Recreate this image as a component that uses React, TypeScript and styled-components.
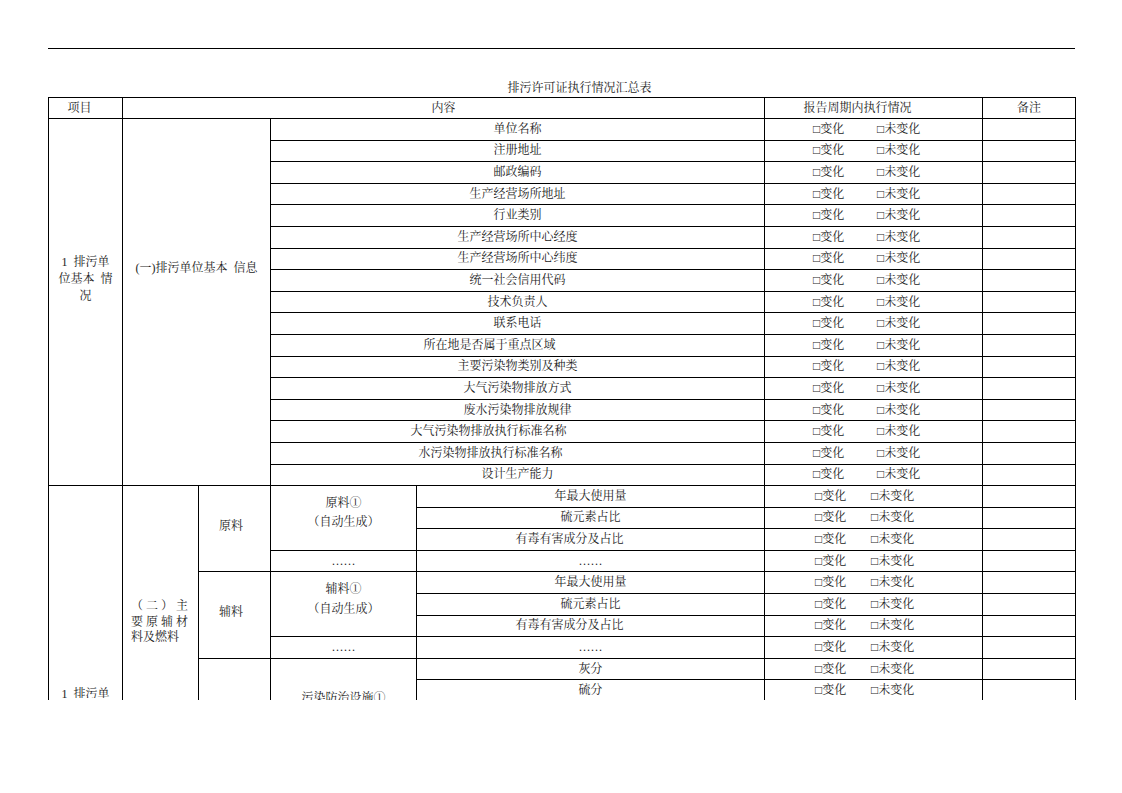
import React from "react";
import styled, { createGlobalStyle } from "styled-components";

const GlobalStyle = createGlobalStyle`
  html, body { margin: 0; padding: 0; background: #fff; }
  body {
    font-family: "Liberation Serif", "Noto Serif CJK SC", "Noto Sans CJK SC", serif;
    color: #1c1c1c;
  }
`;

const Page = styled.div`
  width: 1122px;
  height: 700px;
  overflow: hidden;
  box-sizing: border-box;
  padding: 0 47px 0 48px;
`;

const TopRule = styled.div`
  margin-top: 48px;
  height: 0;
  border-top: 1px solid #000;
`;

const Title = styled.div`
  margin-top: 31px;
  height: 17px;
  line-height: 17px;
  font-size: 12px;
  text-align: center;
  padding-left: 36px;
`;

const Sheet = styled.table`
  width: 1027px;
  border-collapse: collapse;
  table-layout: fixed;
  font-size: 12px;
`;

const Col = styled.col<{ $w: number }>`
  width: ${(p) => p.$w}px;
`;

const Row = styled.tr<{ $h?: number }>`
  height: ${(p) => p.$h ?? 21.6}px;
`;

const HeadCell = styled.th<{ $offset?: number }>`
  border: 1px solid #000;
  font-weight: normal;
  padding: 0 ${(p) => 4 + (p.$offset ?? 0)}px 0 4px;
  text-align: center;
  vertical-align: middle;
  line-height: 17px;
  white-space: nowrap;
`;

const ItemCell = styled.td<{ $offset?: number }>`
  border: 1px solid #000;
  padding: 0 ${(p) => 4 + (p.$offset ?? 0)}px 0 4px;
  text-align: center;
  vertical-align: middle;
  line-height: 17px;
  white-space: nowrap;
  overflow: hidden;
`;

const GroupCell = styled.td<{ $top: number; $lh?: number; $open?: boolean }>`
  border: 1px solid #000;
  border-bottom: ${(p) => (p.$open ? "none" : "1px solid #000")};
  padding: ${(p) => p.$top}px 4px 0 4px;
  text-align: center;
  vertical-align: top;
  line-height: ${(p) => p.$lh ?? 17}px;
  white-space: nowrap;
`;

const CutText = styled.div<{ $h: number }>`
  height: ${(p) => p.$h}px;
  overflow: hidden;
`;

const SubGroupCell = styled.td<{ $lh?: number; $lift?: number; $offset?: number; $open?: boolean }>`
  border: 1px solid #000;
  border-bottom: ${(p) => (p.$open ? "none" : "1px solid #000")};
  padding: 0 ${(p) => 4 + (p.$offset ?? 0)}px ${(p) => p.$lift ?? 0}px 4px;
  text-align: center;
  vertical-align: middle;
  line-height: ${(p) => p.$lh ?? 17}px;
  white-space: nowrap;
`;

const JustifyCell = styled.td<{ $top: number; $open?: boolean }>`
  border: 1px solid #000;
  border-bottom: ${(p) => (p.$open ? "none" : "1px solid #000")};
  padding: ${(p) => p.$top}px 10px 0 8px;
  vertical-align: top;
  line-height: 15.5px;
`;

const JustLine = styled.div<{ $spread?: boolean }>`
  display: flex;
  justify-content: ${(p) => (p.$spread ? "space-between" : "flex-start")};
`;

const CheckCell = styled.td<{ $pl: number }>`
  border: 1px solid #000;
  padding: 0 0 0 ${(p) => p.$pl}px;
  text-align: left;
  vertical-align: middle;
  line-height: 17px;
  white-space: nowrap;
`;

const Option = styled.span<{ $w?: number }>`
  display: inline-block;
  width: ${(p) => (p.$w ? `${p.$w}px` : "auto")};
`;

const NoteCell = styled.td`
  border: 1px solid #000;
  padding: 0;
`;

type Variant = { pl: number; w: number };
const SEC1: Variant = { pl: 48, w: 64 };
const SEC2: Variant = { pl: 50, w: 56 };

function Status({ v }: { v: Variant }) {
  return (
    <>
      <CheckCell $pl={v.pl}>
        <Option $w={v.w}>□变化</Option>
        <Option>□未变化</Option>
      </CheckCell>
      <NoteCell />
    </>
  );
}

const basicItems: { label: string; offset?: number }[] = [
  { label: "单位名称" },
  { label: "注册地址" },
  { label: "邮政编码" },
  { label: "生产经营场所地址" },
  { label: "行业类别" },
  { label: "生产经营场所中心经度" },
  { label: "生产经营场所中心纬度" },
  { label: "统一社会信用代码" },
  { label: "技术负责人" },
  { label: "联系电话" },
  { label: "所在地是否属于重点区域", offset: 56 },
  { label: "主要污染物类别及种类" },
  { label: "大气污染物排放方式" },
  { label: "废水污染物排放规律" },
  { label: "大气污染物排放执行标准名称", offset: 58 },
  { label: "水污染物排放执行标准名称", offset: 54 },
  { label: "设计生产能力" },
];

const materialItems: { label: string; offset?: number }[] = [
  { label: "年最大使用量" },
  { label: "硫元素占比" },
  { label: "有毒有害成分及占比", offset: 42 },
];

const fuelItems = ["灰分", "硫分"];

function JustifiedText({ lines }: { lines: string[] }) {
  return (
    <>
      {lines.map((line, i) => (
        <JustLine key={i} $spread={i < lines.length - 1}>
          {Array.from(line).map((ch, j) => (
            <span key={j}>{ch}</span>
          ))}
        </JustLine>
      ))}
    </>
  );
}

function MaterialRows({ kind }: { kind: string }) {
  return (
    <>
      {materialItems.slice(1).map((it) => (
        <Row key={kind + it.label}>
          <ItemCell $offset={it.offset}>{it.label}</ItemCell>
          <Status v={SEC2} />
        </Row>
      ))}
      <Row>
        <ItemCell>……</ItemCell>
        <ItemCell>……</ItemCell>
        <Status v={SEC2} />
      </Row>
    </>
  );
}

function MaterialHead({ kind }: { kind: string }) {
  return (
    <>
      <SubGroupCell rowSpan={4} $lift={5} $offset={7}>
        {kind}
      </SubGroupCell>
      <SubGroupCell rowSpan={3} $lh={19.4} $lift={9}>
        {kind}①
        <br />
        （自动生成）
      </SubGroupCell>
      <ItemCell>{materialItems[0].label}</ItemCell>
      <Status v={SEC2} />
    </>
  );
}

export default function App() {
  const sec2Rows = 4 + 4 + fuelItems.length;
  return (
    <>
      <GlobalStyle />
      <Page>
        <TopRule />
        <Title>排污许可证执行情况汇总表</Title>
        <Sheet>
          <colgroup>
            <Col $w={74} />
            <Col $w={76} />
            <Col $w={72} />
            <Col $w={146} />
            <Col $w={348} />
            <Col $w={218} />
            <Col $w={93} />
          </colgroup>
          <thead>
            <Row $h={21}>
              <HeadCell $offset={12}>项目</HeadCell>
              <HeadCell colSpan={4}>内容</HeadCell>
              <HeadCell $offset={32}>报告周期内执行情况</HeadCell>
              <HeadCell>备注</HeadCell>
            </Row>
          </thead>
          <tbody>
            {basicItems.map((it, i) => (
              <Row key={it.label}>
                {i === 0 && (
                  <>
                    <GroupCell rowSpan={basicItems.length} $top={135}>
                      1{"\u00a0\u00a0"}排污单
                      <br />
                      位基本{"\u00a0\u00a0"}情
                      <br />况
                    </GroupCell>
                    <GroupCell rowSpan={basicItems.length} colSpan={2} $top={141}>
                      (一)排污单位基本{"\u00a0\u00a0"}信息
                    </GroupCell>
                  </>
                )}
                <ItemCell colSpan={2} $offset={it.offset}>
                  {it.label}
                </ItemCell>
                <Status v={SEC1} />
              </Row>
            ))}

            <Row>
              <GroupCell rowSpan={sec2Rows} $top={200} $open>
                <CutText $h={12}>1{"\u00a0\u00a0"}排污单</CutText>
              </GroupCell>
              <JustifyCell rowSpan={sec2Rows} $top={113} $open>
                <JustifiedText lines={["（二）主", "要原辅材", "料及燃料"]} />
              </JustifyCell>
              <MaterialHead kind="原料" />
            </Row>
            <MaterialRows kind="原料" />

            <Row>
              <MaterialHead kind="辅料" />
            </Row>
            <MaterialRows kind="辅料" />

            {fuelItems.map((label, i) => (
              <Row key={"fuel" + label}>
                {i === 0 && (
                  <>
                    <SubGroupCell rowSpan={fuelItems.length} $open />
                    <GroupCell rowSpan={fuelItems.length} $top={31} $open>
                      <CutText $h={10}>污染防治设施①</CutText>
                    </GroupCell>
                  </>
                )}
                <ItemCell>{label}</ItemCell>
                <Status v={SEC2} />
              </Row>
            ))}
          </tbody>
        </Sheet>
      </Page>
    </>
  );
}
